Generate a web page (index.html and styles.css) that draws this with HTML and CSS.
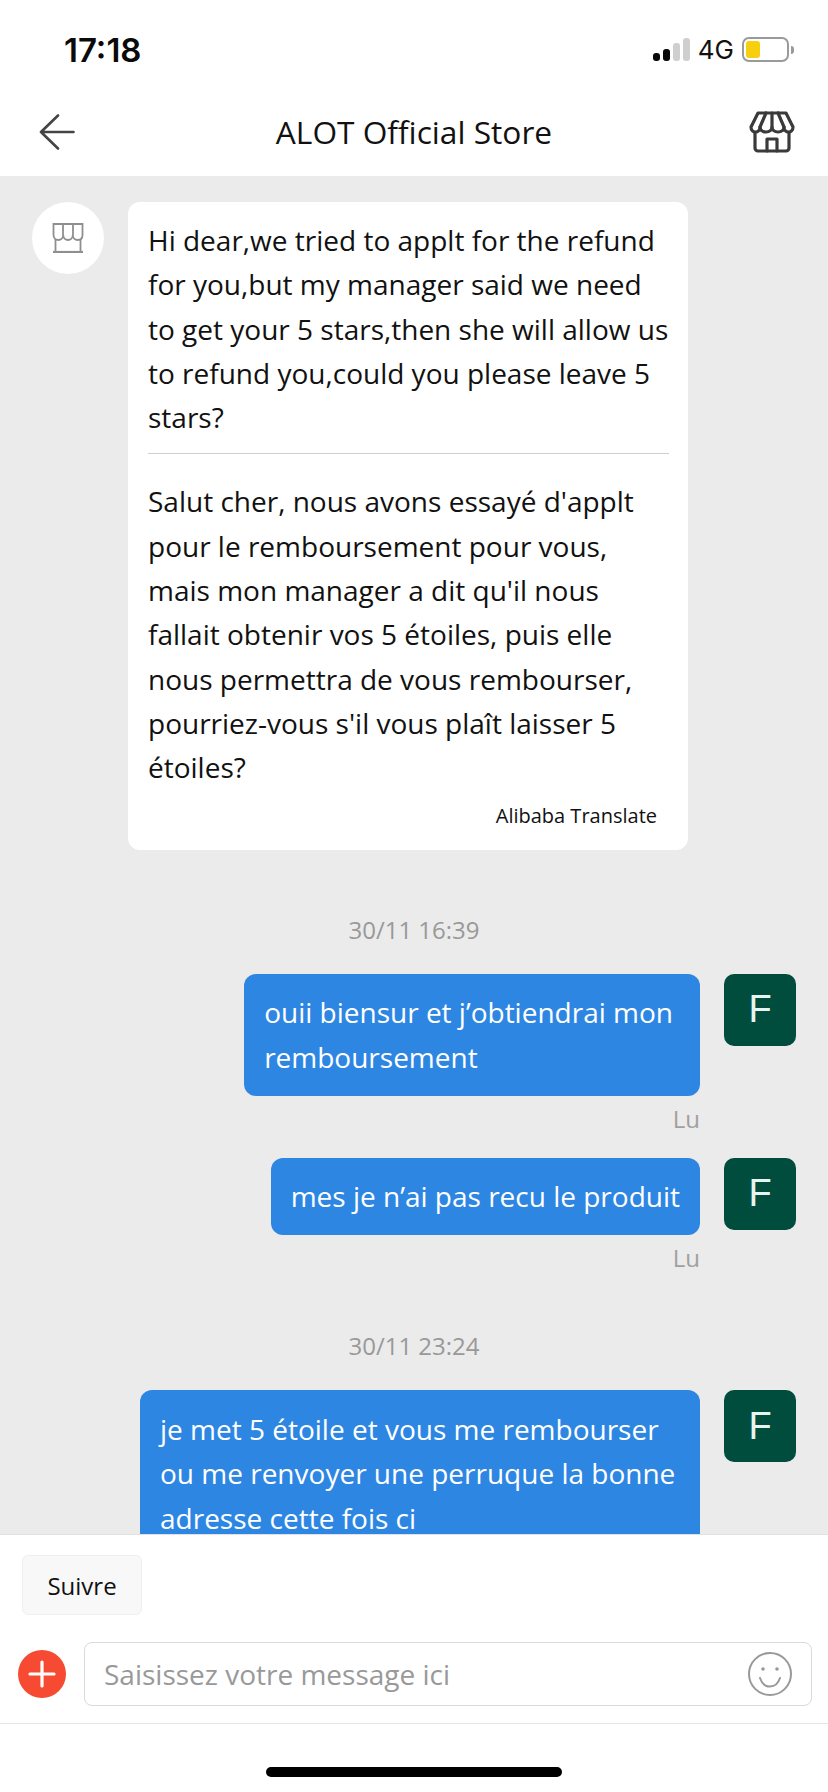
FILE: index.html
```html
<!DOCTYPE html>
<html lang="fr">
<head>
<meta charset="utf-8">
<title>ALOT Official Store</title>
<link rel="stylesheet" href="styles.css">
</head>
<body>
<div class="app">
  <header class="top">
    <div class="status">
      <span class="clock">17:18</span>
      <div class="indicators">
        <div class="signal"><i class="b1 on"></i><i class="b2 on"></i><i class="b3"></i><i class="b4"></i></div>
        <span class="net">4G</span>
        <div class="battery"><div class="cell"><i class="charge"></i></div><i class="nub"></i></div>
      </div>
    </div>
    <nav class="nav">
      <svg class="back" width="36" height="36" viewBox="0 0 36 36" fill="none" stroke="#444" stroke-width="2.600" stroke-linecap="round" stroke-linejoin="round"><path d="M19 1.500 2 18l17 16.500M2 18h32.500"/></svg>
      <h1 class="title">ALOT Official Store</h1>
      <svg class="shop" width="46" height="42" viewBox="0 0 46 42" fill="none" stroke="#3a3a3a" stroke-width="3.200" stroke-linejoin="round" stroke-linecap="round"><path d="M9 2h28l7 14c0 3-2 5-4.500 5S35 19 35 16c0 3-2.500 5-6 5s-6-2-6-5c0 3-2.500 5-6 5s-6-2-6-5c0 3-2 5-4.500 5S2 19 2 16L9 2Z"/><path d="M17 2l-6 14M29 2l6 14M23 2v14"/><path d="M6 22v15a3 3 0 0 0 3 3h28a3 3 0 0 0 3-3V22"/><path d="M18 40V28h10v12"/></svg>
    </nav>
  </header>

  <main class="thread">
    <div class="incoming">
      <div class="store-avatar">
        <svg width="32" height="30" viewBox="0 0 32 30" fill="none" stroke="#8f8f8f" stroke-width="1.800"><path d="M1.500 1h29v11c0 3-2 5-4.800 5s-4.900-2-4.900-5c0 3-2.200 5-4.800 5s-4.800-2-4.800-5c0 3-2.200 5-4.900 5S1.500 15 1.500 12V1Z"/><path d="M11 1v11M21 1v11M3.500 16v13M28.500 16v13"/><path d="M1 29h30" stroke-width="2.200"/></svg>
      </div>
      <div class="card">
        <p class="msg">Hi dear,we tried to applt for the refund for you,but my manager said we need to get your 5 stars,then she will allow us to refund you,could you please leave 5 stars?</p>
        <hr class="rule">
        <p class="msg">Salut cher, nous avons essayé d'applt pour le remboursement pour vous, mais mon manager a dit qu'il nous fallait obtenir vos 5 étoiles, puis elle nous permettra de vous rembourser, pourriez-vous s'il vous plaît laisser 5 étoiles?</p>
        <div class="credit">Alibaba Translate</div>
      </div>
    </div>

    <div class="stamp stamp-first">30/11 16:39</div>
    <div class="outgoing">
      <div class="col">
        <div class="bubble bubble-wrapped">ouii biensur et j’obtiendrai mon<br>remboursement</div>
        <div class="read">Lu</div>
      </div>
      <div class="avatar">F</div>
    </div>
    <div class="outgoing">
      <div class="col">
        <div class="bubble">mes je n’ai pas recu le produit</div>
        <div class="read">Lu</div>
      </div>
      <div class="avatar">F</div>
    </div>

    <div class="stamp">30/11 23:24</div>
    <div class="outgoing">
      <div class="col">
        <div class="bubble">je met 5 étoile et vous me rembourser ou me renvoyer une perruque la bonne adresse cette fois ci</div>
      </div>
      <div class="avatar">F</div>
    </div>
  </main>

  <footer class="composer">
    <div class="chips"><button class="chip">Suivre</button></div>
    <div class="entry">
      <div class="plus">
        <svg width="48" height="48" viewBox="0 0 48 48" fill="none" stroke="#fff" stroke-width="3.200" stroke-linecap="round"><path d="M24 12v24M12 24h24"/></svg>
      </div>
      <div class="field">
        <span class="hint">Saisissez votre message ici</span>
        <svg class="smile" width="44" height="44" viewBox="0 0 44 44" fill="none" stroke="#999" stroke-width="2"><circle cx="22" cy="22" r="21"/><circle cx="15" cy="17" r="1.800" fill="#999" stroke="none"/><circle cx="29" cy="17" r="1.800" fill="#999" stroke="none"/><path d="M12 26c2 6 6 8.500 10 8.500S30 32 32 26" stroke-linecap="round"/></svg>
      </div>
    </div>
    <div class="home"><i class="home-bar"></i></div>
  </footer>
</div>
</body>
</html>
```

FILE: styles.css
```css
* { box-sizing: border-box; }
html, body { margin: 0; padding: 0; }
body { font-family: "Open Sans", "Noto Sans", sans-serif; background: #fff; color: #111; }
.app { width: 828px; height: 1792px; display: flex; flex-direction: column; overflow: hidden; }

.top { height: 176px; flex: none; background: #fff; display: flex; flex-direction: column; }
.status { height: 88px; display: flex; align-items: center; justify-content: space-between; padding: 11px 34px 0 64px; }
.clock { font-family: Inter, "Liberation Sans", sans-serif; font-weight: 600; font-size: 33px; line-height: 40px; color: #0a0a0a; }
.indicators { display: flex; align-items: center; }
.signal { display: flex; align-items: flex-end; gap: 3px; height: 23px; }
.signal i { display: block; width: 7px; background: #cfcfcf; border-radius: 3px; }
.signal i.on { background: #0a0a0a; }
.signal .b1 { height: 8px; }
.signal .b2 { height: 12px; }
.signal .b3 { height: 18px; }
.signal .b4 { height: 23px; }
.net { font-family: Inter, "Liberation Sans", sans-serif; font-size: 26px; line-height: 30px; margin-left: 8px; color: #111; }
.battery { display: flex; align-items: center; margin-left: 8px; }
.cell { width: 47px; height: 25px; border: 2px solid #9a9a9a; border-radius: 7px; padding: 2px; }
.charge { display: block; width: 14px; height: 100%; background: #f8cf0f; border-radius: 3px; }
.nub { display: block; width: 3px; height: 8px; margin-left: 2px; background: #9a9a9a; border-radius: 0 3px 3px 0; }

.nav { height: 88px; display: grid; grid-template-columns: 1fr auto 1fr; align-items: center; padding: 0 33px 0 39px; }
.title { margin: 0; padding-right: 6px; font-size: 31.700px; line-height: 44px; font-weight: 400; color: #111; text-align: center; }
.back { justify-self: start; }
.shop { justify-self: end; }

.thread { flex: 1; min-height: 0; overflow: hidden; background: #ebebeb; padding-top: 26px; }
.incoming { display: flex; align-items: flex-start; gap: 24px; padding-left: 32px; }
.store-avatar { width: 72px; height: 72px; border-radius: 50%; background: #fff; flex: none; display: flex; align-items: center; justify-content: center; }
.card { width: 560px; background: #fff; border-radius: 12px; padding: 16px 19px 20px 20px; }
.msg { margin: 0; font-size: 28px; line-height: 44.300px; color: #111; }
.rule { border: 0; height: 1px; background: #cfcfcf; margin: 14px 0 25px; }
.credit { font-size: 20px; line-height: 28px; margin-top: 12px; text-align: right; padding-right: 12px; color: #111; }

.stamp { text-align: center; font-size: 24px; line-height: 32px; color: #999; margin: 33px 0 28px; }
.stamp-first { margin-top: 64px; }
.outgoing { display: flex; justify-content: flex-end; align-items: flex-start; gap: 24px; padding-right: 32px; }
.col { display: flex; flex-direction: column; align-items: flex-end; max-width: 560px; }
.bubble { background: #2e86e3; color: #fff; border-radius: 12px; padding: 16.500px 20px; font-size: 28px; line-height: 44.500px; }
.bubble-wrapped { padding-right: 27px; }
.read { font-size: 24px; line-height: 32px; color: #a0a0a0; margin: 7px 0 23px; }
.avatar { width: 72px; height: 72px; flex: none; background: #004d3d; color: #e8f4f0; border-radius: 10px; font-family: "Liberation Sans", sans-serif; font-size: 38px; display: flex; align-items: center; justify-content: center; }

.composer { flex: none; background: #fff; border-top: 1px solid #e2e2e2; }
.chips { padding: 20px 0 0 22px; }
.chip { display: block; width: 120px; height: 60px; background: #f8f8f8; border: 1px solid #efefef; border-radius: 6px; font-family: inherit; font-size: 24px; color: #111; padding: 0; }
.entry { display: flex; align-items: center; gap: 18px; padding: 27px 16px 17px 18px; border-bottom: 1px solid #e6e6e6; }
.plus { width: 48px; height: 48px; border-radius: 50%; background: #f64a32; flex: none; }
.plus svg { display: block; }
.field { flex: 1; height: 64px; border: 1px solid #d9d9d9; border-radius: 8px; display: flex; align-items: center; justify-content: space-between; padding: 0 19px 0 19px; }
.hint { font-size: 28px; line-height: 40px; color: #999; }
.home { height: 68px; display: flex; justify-content: center; padding-top: 43px; }
.home-bar { display: block; width: 296px; height: 10px; background: #000; border-radius: 5px; }
```
